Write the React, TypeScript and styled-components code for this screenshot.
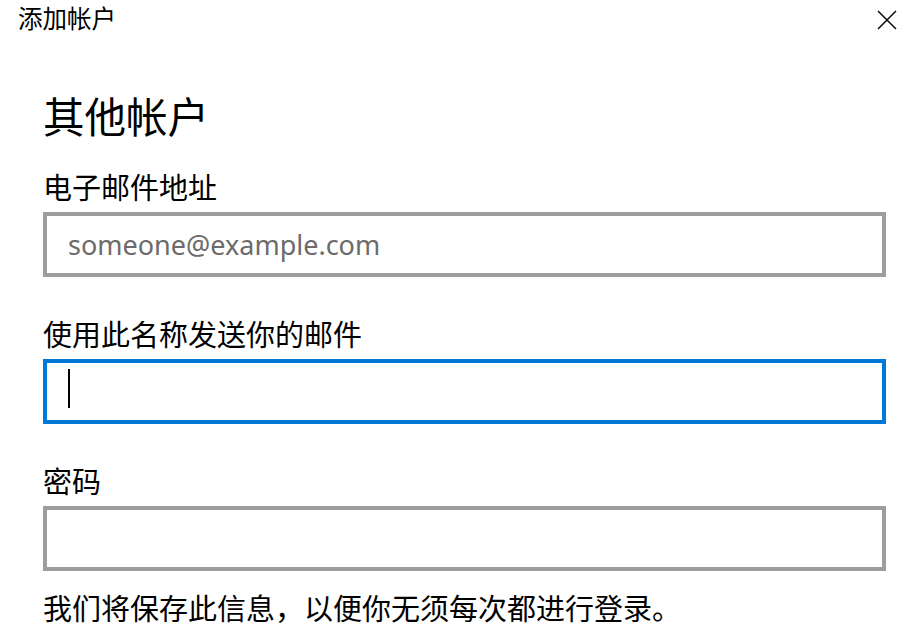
import styled, { createGlobalStyle } from "styled-components";

const GlobalStyle = createGlobalStyle`
    html, body {
        margin: 0;
        padding: 0;
        background: #ffffff;
    }
    body {
        font-family: "Noto Sans CJK SC", "Noto Sans", sans-serif;
        color: #000000;
    }
`;

const Dialog = styled.div`
    width: 917px;
    height: 637px;
    overflow: hidden;
    display: flex;
    flex-direction: column;
`;

const TitleBar = styled.div`
    display: flex;
    justify-content: space-between;
    align-items: center;
    padding: 6px 20px 0 18px;
`;

const WindowTitle = styled.div`
    font-size: 24.5px;
    line-height: 24px;
`;

const CloseButton = styled.button`
    border: none;
    background: none;
    padding: 0;
    margin-top: 3px;
    width: 20px;
    height: 20px;
    display: flex;
    cursor: pointer;
`;

const Content = styled.div`
    display: flex;
    flex-direction: column;
    padding: 64px 31px 0 43px;
`;

const Heading = styled.h1`
    margin: 0 0 36px;
    font-size: 41.5px;
    line-height: 42px;
    font-weight: 400;
`;

const Fields = styled.div`
    display: flex;
    flex-direction: column;
    gap: 42px;
`;

const Field = styled.label`
    display: flex;
    flex-direction: column;
    gap: 12px;
`;

const FieldLabel = styled.span`
    font-size: 29px;
    line-height: 28px;
`;

const InputBox = styled.div<{ $focused?: boolean }>`
    box-sizing: border-box;
    height: 65px;
    display: flex;
    align-items: center;
    padding: 0 20px 0 21px;
    border: 4px solid ${(p) => (p.$focused ? "#0078d7" : "#9d9d9d")};
    background: #ffffff;
`;

const Caret = styled.span`
    width: 2px;
    height: 39px;
    margin-top: -6px;
    background: #000000;
    flex-shrink: 0;
`;

const TextInput = styled.input`
    flex: 1;
    min-width: 0;
    border: none;
    outline: none;
    padding: 0;
    background: transparent;
    font-family: "Noto Sans", "Noto Sans CJK SC", sans-serif;
    font-size: 27px;
    color: #000000;
    caret-color: transparent;
    &::placeholder {
        color: #6b6b6b;
    }
`;

const Note = styled.p`
    margin: 22px 0 0;
    font-size: 29px;
    line-height: 28px;
`;

export default function App() {
    return (
        <Dialog>
            <GlobalStyle />
            <TitleBar>
                <WindowTitle>添加帐户</WindowTitle>
                <CloseButton aria-label="关闭">
                    <svg width="20" height="20" viewBox="0 0 20 20">
                        <path d="M1 1 L19 19 M19 1 L1 19" stroke="#111" strokeWidth="1.6" fill="none" />
                    </svg>
                </CloseButton>
            </TitleBar>
            <Content>
                <Heading>其他帐户</Heading>
                <Fields>
                    <Field>
                        <FieldLabel>电子邮件地址</FieldLabel>
                        <InputBox>
                            <TextInput type="email" placeholder="someone@example.com" />
                        </InputBox>
                    </Field>
                    <Field>
                        <FieldLabel>使用此名称发送你的邮件</FieldLabel>
                        <InputBox $focused>
                            <Caret />
                            <TextInput type="text" />
                        </InputBox>
                    </Field>
                    <Field>
                        <FieldLabel>密码</FieldLabel>
                        <InputBox>
                            <TextInput type="password" />
                        </InputBox>
                    </Field>
                </Fields>
                <Note>我们将保存此信息，以便你无须每次都进行登录。</Note>
            </Content>
        </Dialog>
    );
}
